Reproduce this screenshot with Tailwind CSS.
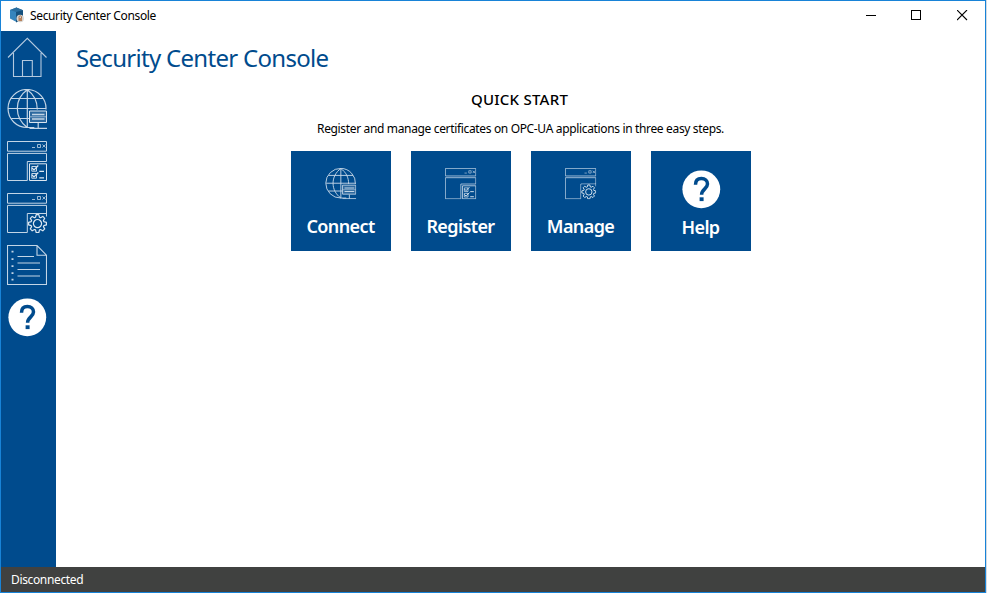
<!DOCTYPE html>
<html lang="en">
<head>
<meta charset="utf-8">
<title>Security Center Console</title>
<script src="https://cdn.jsdelivr.net/npm/@tailwindcss/browser@4"></script>
</head>
<body class="w-[987px] h-[593px] overflow-hidden bg-[#d5dbe2] font-['Noto_Sans','Open_Sans',sans-serif]">
<svg class="hidden">
  <symbol id="home" viewBox="0 0 40 40"><g fill="none" stroke="#b3c9df" stroke-width="1.1"><path d="M1 20.500 20.300 1.300 39.500 20.500M6.500 16v23.500h27.500V16M15.500 39.500v-16h9.800v16"/></g></symbol>
  <symbol id="globe" viewBox="0 0 40 40"><g fill="none" stroke="#c3d5e6" stroke-width="1.200"><path d="M39 20.500A19 19 0 1 0 20.300 38.500h7M20.300.7v37.800M20.300.7C7 10 7 29 20.300 38.500M20.300.7C27 5.500 30.300 12 30.300 20.500M4.500 9.500h31.500M1.500 19.500h37.500M4.500 29.500h18"/></g><path d="M22.500 22h17v11.500h-17z" fill="#2d699f" stroke="#d8e4ef"/><path d="M25 25.500h12.500M25 30h12.500" stroke="#c3d5e6" stroke-width="1.300"/><path d="M22.500 27.800h17" stroke="#c3d5e6" stroke-width=".7"/><path d="M31.200 34v5.300M22.500 39.300H40" stroke="#c3d5e6" stroke-width="1.200"/></symbol>
  <symbol id="window" viewBox="0 0 40 40"><g fill="none" stroke="#c3d5e6" stroke-width="1"><path d="M.5.500h39v9.700H.5zM20.300 39.500H.5V12.400h39v8.100H20.300z"/><path d="M25 6.500h3M30.500 3.500h3v3h-3zM35.500 3.500l3 3m0-3-3 3" stroke-width=".8"/></g></symbol>
  <symbol id="register" viewBox="0 0 40 40"><use href="#window" width="40" height="40"/><g fill="none" stroke="#dce7f1"><path d="M22.500 22.800h17v16.700h-17z" stroke-width="1"/><path d="M24.800 25.500h4.700v4.700h-4.700zM24.800 32.500h4.700v4.700h-4.700z" stroke-width=".9"/><path d="m25 27 2 2 4.300-4.500M25 34l2 2 4.300-4.500M32.300 30.300h4.700M32.300 36.800h4.700" stroke-width="1.200"/></g></symbol>
  <symbol id="manage" viewBox="0 0 40 40"><use href="#window" width="40" height="40"/><path d="M21 21h19v19H21z" fill="#004b8d"/><path d="M39.500 20v3.500" stroke="#c3d5e6"/><g transform="translate(30.500 30.600)" fill="none" stroke="#dce7f1" stroke-width="1.200" stroke-linejoin="round"><path d="M-2-6.300-1.300-8.900H1.300L2-6.300 3-5.900 5.300-7.200 7.200-5.300 5.900-3 6.300-2 8.900-1.300V1.300L6.300 2 5.900 3 7.200 5.300 5.300 7.200 3 5.900 2 6.300 1.300 8.900H-1.300L-2 6.300-3 5.900-5.300 7.200-7.200 5.300-5.900 3-6.300 2-8.900 1.300V-1.300L-6.300-2-5.900-3-7.200-5.300-5.300-7.200-3-5.900z"/><circle r="4.100"/></g></symbol>
  <symbol id="list" viewBox="0 0 40 40"><g fill="none" stroke="#c3d5e6" stroke-width="1.100"><path d="M.5.500h29.500l9.500 9.700v29.300H.5zM30 .5v9.700h9.500"/><path d="M10.500 11.500H27M10.500 18h22.500M10.500 24.500h22.500M10.500 31h22.500"/><path d="M4.500 6.700h2M4.500 14.200h2M4.500 21.200h2M4.500 28.200h2M4.500 34.700h2" stroke-width="1.800"/></g></symbol>
  <symbol id="help" viewBox="0 0 40 40"><circle cx="20.300" cy="20.300" r="18.900" fill="#fff"/><path d="M14.500 15.800C14.500 11.600 16.700 9.600 20.400 9.600s6.100 2.100 6.100 5.500c0 4.700-5.900 5-5.900 10.700" fill="none" stroke="#004b8d" stroke-width="3.500"/><path d="M18.600 28.300h4v3.800h-4z" fill="#004b8d"/></symbol>
</svg>
<div class="w-[986px] h-[593px] flex flex-col border border-[#1883d7] bg-white">
  <header class="h-[30px] shrink-0 flex items-center justify-between">
    <div class="flex items-center pl-2">
      <svg class="w-4 h-4 mr-[5px] -mt-[2px]" viewBox="0 0 16 16"><path d="M1 3 7.500.5V15L1 11.500z" fill="#3685bd"/><path d="M7 .5 14 3.300v9L7 15.500z" fill="#15517e"/><path d="M1 3 7.500.5 14 3.300 7 5z" fill="#2b6e9f"/><circle cx="11.200" cy="11.500" r="3.700" fill="#d6d3cf"/><path d="M9.500 11h3.500v3H9.500z" fill="#b9835c"/><path d="M10 11V9.500q1.300-1.500 2.500 0V11" fill="none" stroke="#a87552"/></svg>
      <h1 class="text-[12px] leading-4 text-black whitespace-nowrap tracking-[-0.36px]">Security Center Console</h1>
    </div>
    <div class="flex items-center gap-[35px] pr-[17px] -mt-px">
      <svg class="w-[11px] h-[11px]" shape-rendering="crispEdges"><path d="M1 5.500h10" stroke="#000"/></svg>
      <svg class="w-[11px] h-[11px]" shape-rendering="crispEdges"><path d="M.5.500h9v9h-9z" fill="none" stroke="#000"/></svg>
      <svg class="w-[11px] h-[11px]"><path d="m0 0 10 10m0-10-10 10" stroke="#000" stroke-width="1.100"/></svg>
    </div>
  </header>
  <div class="flex flex-1 min-h-0">
    <nav class="w-[55px] shrink-0 bg-[#004b8d] flex flex-col gap-3 pl-[6px] pt-[6px]">
      <svg class="w-10 h-10"><use href="#home"/></svg>
      <svg class="w-10 h-10"><use href="#globe"/></svg>
      <svg class="w-10 h-10"><use href="#register"/></svg>
      <svg class="w-10 h-10"><use href="#manage"/></svg>
      <svg class="w-10 h-10"><use href="#list"/></svg>
      <svg class="w-10 h-10"><use href="#help"/></svg>
    </nav>
    <main class="flex-1">
      <h2 class="pl-5 pt-[11px] text-[24px] leading-8 font-normal text-[#004b8d] whitespace-nowrap tracking-[-0.7px]">Security Center Console</h2>
      <section class="flex flex-col items-center">
        <h3 class="mt-[15px] mr-[2px] text-[15px] leading-5 font-medium text-black whitespace-nowrap tracking-[0.25px]">QUICK START</h3>
        <p class="mt-[10px] text-[12px] leading-5 text-black whitespace-nowrap tracking-[-0.345px]">Register and manage certificates on OPC-UA applications in three easy steps.</p>
        <div class="mt-[12px] flex gap-5 text-white text-[18px] leading-6 font-semibold tracking-[-0.6px]">
          <div class="w-[100px] h-[100px] bg-[#004b8d] flex flex-col items-center"><svg class="w-8 h-8 mt-[17px] mb-[14px]" viewBox="0 0 41 41"><use href="#globe" width="40" height="40"/></svg>Connect</div>
          <div class="w-[100px] h-[100px] bg-[#004b8d] flex flex-col items-center"><svg class="w-8 h-8 mt-[17px] mb-[14px]" viewBox="0 0 41 41"><use href="#register" width="40" height="40"/></svg>Register</div>
          <div class="w-[100px] h-[100px] bg-[#004b8d] flex flex-col items-center"><svg class="w-8 h-8 mt-[17px] mb-[14px]" viewBox="0 0 41 41"><use href="#manage" width="40" height="40"/></svg>Manage</div>
          <div class="w-[100px] h-[100px] bg-[#004b8d] flex flex-col items-center"><svg class="w-10 h-10 mt-[18px] mb-[6px]"><use href="#help"/></svg>Help</div>
        </div>
      </section>
    </main>
  </div>
  <footer class="h-[25px] shrink-0 bg-[#404140] text-white text-[12px] leading-[26px] tracking-[-0.35px] pl-[10px]">Disconnected</footer>
</div>
</body>
</html>
